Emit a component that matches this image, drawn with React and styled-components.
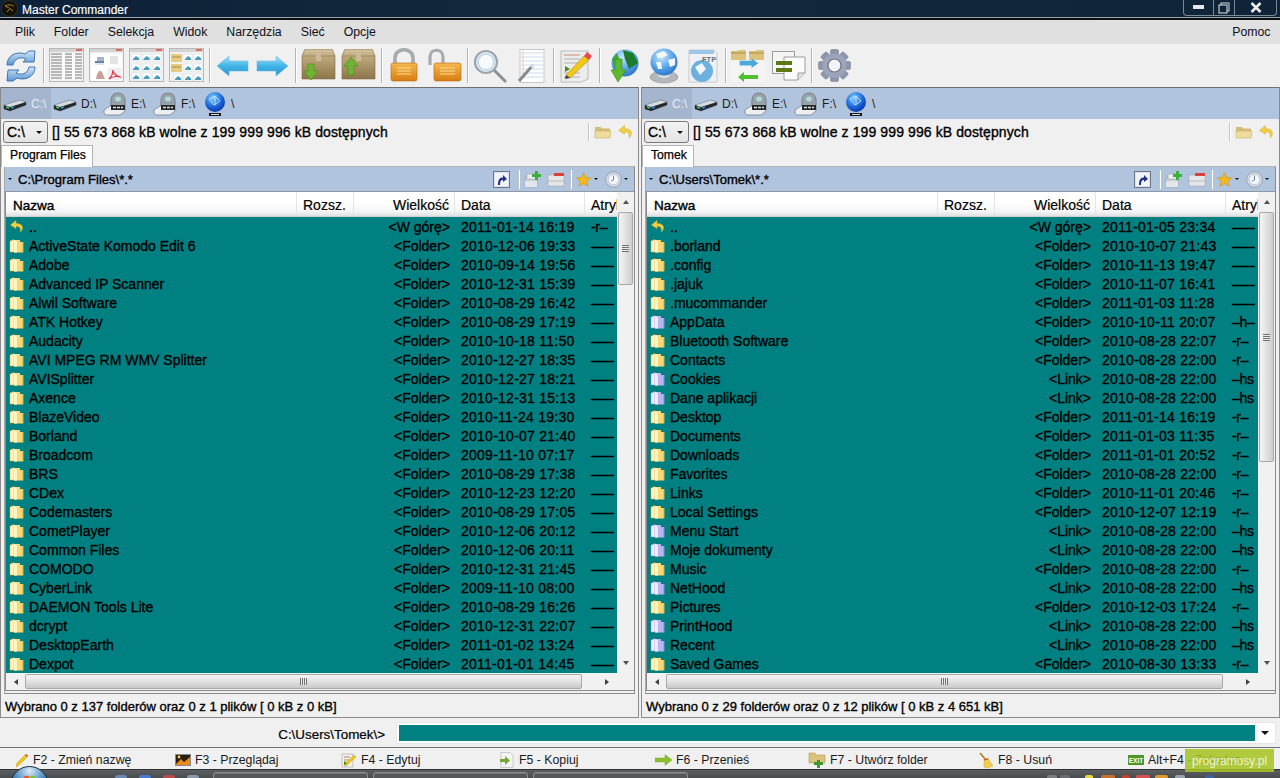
import React from 'react';
import styled, { createGlobalStyle } from 'styled-components';

const Global = createGlobalStyle`
  html, body { margin: 0; padding: 0; background: #f0f0f0; overflow: hidden; }
  * { box-sizing: border-box; }
  #root { width: 1280px; height: 778px; overflow: hidden; }
`;

const Window = styled.div`
  position: relative;
  width: 1280px;
  height: 778px;
  display: flex;
  flex-direction: column;
  overflow: hidden;
  background: #f0f0f0;
  font-family: "Liberation Sans", Arial, sans-serif;
  font-size: 13px;
  color: #000;
`;

const TitleBar = styled.div`
  height: 20px;
  flex: none;
  display: flex;
  align-items: flex-start;
  background: linear-gradient(90deg, #0d2238 0%, #13273d 45%, #0f2339 100%);
  border-bottom: 2px solid #0b0f14;
  box-shadow: inset 0 -1px 0 #9aa4ad;
  padding-left: 1px;
`;
const TitleText = styled.span`
  margin: 2px 0 0 4px;
  color: #fff;
  font-size: 12px;
  line-height: 16px;
  -webkit-text-stroke: 0.15px #fff;
`;
const WinButtons = styled.div`
  margin-left: auto;
  margin-right: 3px;
  display: flex;
  height: 16px;
  border: 1px solid #7c8894;
  border-top: none;
  border-radius: 0 0 4px 4px;
`;
const WinButton = styled.div`
  width: ${p => p.$w}px;
  display: flex;
  align-items: center;
  justify-content: center;
  border-left: ${p => (p.$first ? 'none' : '1px solid #7c8894')};
`;

const MenuBar = styled.div`
  height: 24px;
  flex: none;
  display: flex;
  align-items: center;
  padding: 0 0 0 5.5px;
  background: #e0e0e0;
  font-size: 12.3px;
  color: #101018;
`;
const MenuItem = styled.span`
  padding: 0 9.5px;
  ${p => p.$end && 'margin-left: auto;'}
`;

const ToolBar = styled.div`
  height: 43px;
  flex: none;
  display: flex;
  align-items: center;
  background: #f0f0f0;
`;
const Tool = styled.div`
  width: ${p => p.$w}px;
  height: 36px;
  flex: none;
  display: flex;
  align-items: center;
  justify-content: center;
`;
const ToolSep = styled.div`
  width: 1px;
  height: 35px;
  margin: 0 2px;
  background: #b4b4b4;
  box-shadow: 1px 0 0 #fff;
`;

const Panels = styled.div`
  display: grid;
  grid-template-columns: 639px 639px;
  gap: 2px;
  height: 631px;
  flex: none;
`;
const Panel = styled.div`
  display: flex;
  flex-direction: column;
  border: 1px solid #8a8a8a;
  border-top-color: #6f6f6f;
  min-width: 0;
`;
const DriveBar = styled.div`
  height: 31px;
  flex: none;
  display: flex;
  background: #b0c4de;
`;
const Drive = styled.div`
  width: 50px;
  flex: none;
  display: flex;
  align-items: center;
  padding-left: 2px;
  gap: 4px;
  font-size: 12px;
  color: ${p => (p.$on ? '#e6ecf4' : '#1a1a1a')};
  background: ${p => (p.$on ? '#a4b5cd' : 'transparent')};
`;
const InfoRow = styled.div`
  height: 26px;
  flex: none;
  display: flex;
  align-items: center;
  padding: 0 4px 0 2px;
`;
const Combo = styled.div`
  width: 45px;
  height: 22px;
  flex: none;
  display: flex;
  align-items: center;
  justify-content: space-between;
  padding: 0 5px 0 3px;
  border: 1px solid #7a7a7a;
  border-radius: 3px;
  background: linear-gradient(#f3f3f3, #e4e4e4);
`;
const Bold = styled.span`
  font-size: 14px;
  white-space: nowrap;
  -webkit-text-stroke: 0.35px #000;
`;
const FreeText = styled(Bold)`
  margin-left: 4px;
  letter-spacing: 0.1px;
`;
const Caret = styled.span`
  width: 0;
  height: 0;
  flex: none;
  margin: ${p => p.$m || 0};
  border-left: ${p => p.$s || 3.5}px solid transparent;
  border-right: ${p => p.$s || 3.5}px solid transparent;
  border-top: ${p => p.$s || 3.5}px solid ${p => p.$c || '#111'};
`;
const RightIcons = styled.div`
  margin-left: auto;
  display: flex;
  align-items: center;
  gap: ${p => p.$gap || 5}px;
`;
const MiniSep = styled.div`
  width: 1px;
  height: ${p => p.$h || 18}px;
  background: #c4c4c4;
  box-shadow: 1px 0 0 #fff;
`;
const ShortcutWrap = styled.div`
  display: flex;
  margin-right: 3px;
`;
const TabStrip = styled.div`
  height: 22px;
  flex: none;
  display: flex;
  align-items: flex-end;
  margin-bottom: -1px;
  position: relative;
  z-index: 1;
`;
const Tab = styled.div`
  height: 22px;
  padding: 0 6px 3px 8px;
  display: flex;
  align-items: center;
  background: #fff;
  border: 1px solid #b4b4b4;
  border-bottom: none;
  font-size: 12.2px;
  -webkit-text-stroke: 0.25px #000;
  white-space: nowrap;
`;
const TabBody = styled.div`
  flex: 1;
  min-height: 0;
  margin: 0 3px;
  display: flex;
  flex-direction: column;
  border: 1px solid #8a8a8a;
  border-left-color: #a8a8a8;
  border-top-color: #b4b4b4;
`;
const PathBar = styled.div`
  height: 25px;
  flex: none;
  display: flex;
  align-items: center;
  background: #b0c4de;
  padding: 0 6px 0 3px;
  border-bottom: 1px solid #8f98a4;
`;
const PathText = styled(Bold)`
  margin-left: 6px;
  font-size: 13px;
`;
const ListWrap = styled.div`
  display: flex;
  flex-direction: column;
  height: 499px;
  flex: none;
  width: 630px;
  border-left: 1px solid #8a8a8a;
  border-right: 1px solid #8a8a8a;
  border-bottom: 1px solid #8a8a8a;
`;
const ListMain = styled.div`
  display: flex;
  height: 481px;
  flex: none;
`;
const Table = styled.div`
  width: 611px;
  flex: none;
  display: flex;
  flex-direction: column;
  overflow: hidden;
`;
const Cols = styled.div`
  display: grid;
  grid-template-columns: 291px 57px 101px 130px 32px;
`;
const Header = styled(Cols)`
  height: 25px;
  flex: none;
  background: linear-gradient(#ffffff 40%, #f4f5f6 80%, #dfe0e1);
  border-bottom: 1px solid #d0d0d0;
`;
const HeadCell = styled.div`
  display: flex;
  align-items: center;
  justify-content: ${p => (p.$right ? 'flex-end' : 'flex-start')};
  padding: ${p => (p.$right ? '2px 5px 0 0' : p.$strong ? '2px 0 0 7px' : '2px 0 0 6px')};
  font-size: ${p => (p.$strong ? 13.5 : 14)}px;
  -webkit-text-stroke: ${p => (p.$strong ? '0.4px' : '0.2px')} #000;
  border-right: ${p => (p.$noline ? 'none' : '1px solid #e4e4e4')};
  white-space: nowrap;
  overflow: hidden;
`;
const Rows = styled.div`
  flex: 1;
  background: #008080;
  overflow: hidden;
`;
const Row = styled(Cols)`
  height: 19px;
  align-items: center;
`;
const Name = styled.div`
  display: flex;
  align-items: center;
  gap: 4px;
  padding-left: 3px;
  white-space: nowrap;
  overflow: hidden;
`;
const Cell = styled(Bold)`
  display: block;
  overflow: hidden;
  ${p => p.$right && 'text-align: right; padding-right: 5px;'}
  ${p => p.$date && 'padding-left: 6px; letter-spacing: 0.25px;'}
  ${p => p.$attr && 'padding-left: 6px; letter-spacing: -0.3px;'}
`;
const VBar = styled.div`
  width: 17px;
  flex: none;
  display: flex;
  flex-direction: column;
  background: #f1f1f1;
`;
const VBtn = styled.div`
  height: 20px;
  flex: none;
  display: flex;
  align-items: center;
  justify-content: center;
`;
const VTrack = styled.div`
  flex: 1;
  min-height: 0;
`;
const VThumb = styled.div`
  height: ${p => p.$h}px;
  margin: 0 1px;
  display: flex;
  align-items: center;
  justify-content: center;
  border: 1px solid #a8a8a8;
  border-radius: 2px;
  background: linear-gradient(90deg, #f4f4f4, #e2e2e2 50%, #cdcdcd);
`;
const UpCaret = styled.span`
  width: 0;
  height: 0;
  border-left: 3.5px solid transparent;
  border-right: 3.5px solid transparent;
  border-bottom: 4px solid #505050;
`;
const DownCaret = styled.span`
  width: 0;
  height: 0;
  border-left: 3.5px solid transparent;
  border-right: 3.5px solid transparent;
  border-top: 4px solid #505050;
`;
const Grip = styled.div`
  width: 7px;
  height: 7px;
  background: repeating-linear-gradient(180deg, #707070 0 1px, #ececec 1px 2px);
`;
const GripH = styled.div`
  width: 7px;
  height: 7px;
  background: repeating-linear-gradient(90deg, #707070 0 1px, #ececec 1px 2px);
`;
const HBar = styled.div`
  height: 17px;
  flex: none;
  display: flex;
  align-items: stretch;
  background: #f1f1f1;
`;
const HBtn = styled.div`
  width: 19px;
  flex: none;
  display: flex;
  align-items: center;
  justify-content: center;
  ${p => p.$push && 'margin-left: 15px;'}
`;
const HThumb = styled.div`
  width: 557px;
  margin: 1px 0;
  flex: none;
  display: flex;
  align-items: center;
  justify-content: center;
  border: 1px solid #a8a8a8;
  border-radius: 2px;
  background: linear-gradient(#f4f4f4, #e2e2e2 50%, #c8c8c8);
`;
const LeftCaret = styled.span`
  width: 0;
  height: 0;
  border-top: 3.5px solid transparent;
  border-bottom: 3.5px solid transparent;
  border-right: 4px solid #404040;
`;
const RightCaret = styled.span`
  width: 0;
  height: 0;
  border-top: 3.5px solid transparent;
  border-bottom: 3.5px solid transparent;
  border-left: 4px solid #404040;
`;
const Status = styled.div`
  height: 23px;
  flex: none;
  display: flex;
  align-items: center;
  padding: 1px 0 0 4px;
`;
const StatusText = styled(Bold)`
  font-size: 13px;
`;
const CommandRow = styled.div`
  height: 29px;
  flex: none;
  display: flex;
  align-items: center;
  justify-content: flex-end;
  padding-right: 4px;
`;
const CmdLabel = styled(Bold)`
  font-size: 13.4px;
  margin: 3px 11px 0 0;
  -webkit-text-stroke: 0.2px #000;
`;
const CmdInput = styled.div`
  width: 880px;
  height: 22px;
  display: flex;
  align-items: stretch;
  background: #fff;
  border: 1px solid #e6e6e6;
  padding: 2px 0 2px 2px;
`;
const CmdField = styled.div`
  flex: 1;
  background: #008080;
`;
const CmdDrop = styled.div`
  width: 20px;
  flex: none;
  display: flex;
  align-items: center;
  justify-content: center;
`;
const FnBar = styled.div`
  height: 22px;
  flex: none;
  display: grid;
  grid-template-columns: 160px 166px 158px 156px 153px 171px 149px 1fr;
  padding: 3px 0 0 15px;
  border-top: 1px solid #707070;
  background: #f0f0f0;
`;
const FnItem = styled.div`
  display: flex;
  align-items: center;
  gap: 4px;
  font-size: 12.3px;
  color: #1a1a22;
  white-space: nowrap;
`;
const TaskBar = styled.div`
  flex: 1;
  min-height: 0;
  display: flex;
  align-items: flex-start;
  background: linear-gradient(#2f3336 0 1px, #5b5f62 1px, #4a4d50);
  position: relative;
`;
const Orb = styled.div`
  width: 39px;
  height: 39px;
  margin: -3px 0 0 10px;
  flex: none;
  border-radius: 50%;
  border: 1px solid #1a2a38;
  background:
    radial-gradient(circle at 42% 32%, #e05a3c 0 3px, transparent 3.5px),
    radial-gradient(circle at 58% 32%, #7ac040 0 3px, transparent 3.5px),
    radial-gradient(circle at 50% 10%, #dbeaf6, #4a8cc0 40%, #1a4a78 70%, #0c2236);
`;
const Quick = styled.div`
  margin: 6px 0 0 66px;
  width: 98px;
  display: flex;
  gap: 12px;
  flex: none;
`;
const QuickDot = styled.div`
  width: 12px;
  height: 12px;
  border-radius: 3px;
  background: ${p => p.$c};
`;
const TaskBtn = styled.div`
  width: 155px;
  height: 20px;
  flex: none;
  margin: 3px 5px 0 0;
  border: 1px solid #8b8f92;
  border-radius: 3px;
  background: #55595c;
  box-shadow: inset 0 1px 0 #74787b;
`;
const Tray = styled.div`
  margin: 6px 0 0 auto;
  width: 233px;
  display: flex;
`;
const TrayDot = styled.div`
  width: ${p => p.$w}px;
  height: 12px;
  flex: none;
  margin-left: ${p => p.$l}px;
  border-radius: 2px;
  background: ${p => p.$c};
`;
const Watermark = styled.div`
  position: absolute;
  left: 1185px;
  top: 749px;
  width: 89px;
  height: 23px;
  display: flex;
  align-items: center;
  justify-content: center;
  background: rgba(166, 196, 38, 0.88);
  color: #f0f3dc;
  font-size: 12px;
`;

/* ---------- icons ---------- */
const FolderIcon = ({ purple }) => {
  const a = purple ? '#b9b5ee' : '#f6d878';
  const b = purple ? '#ecebfc' : '#fdf4c4';
  const c = purple ? '#8f8ad6' : '#d8ae3c';
  return (
    <svg width="16" height="16" viewBox="0 0 16 16">
      <path d="M1 3 L5 1.5 L5 14 L1 14 Z" fill={b} stroke={c} strokeWidth=".5" />
      <path d="M5 2 H11 V4 H14 V14.5 H5 Z" fill={a} />
      <path d="M5 2 L8 3 V14.5 H5 Z" fill={b} />
      <path d="M14 4 V14.5" stroke={c} strokeWidth="1" />
    </svg>
  );
};
const UpIcon = ({ size = 16 }) => (
  <svg width={size} height={size} viewBox="0 0 16 16">
    <path d="M7 1.5 L1.5 6 L7 9.5 V7.2 C10 7 12 8.5 11.5 13 C14.5 10 15 4.5 7 4.5 Z" fill="#f0d040" stroke="#d8b030" strokeWidth=".6" />
  </svg>
);
const HddIcon = () => (
  <svg width="24" height="18" viewBox="0 0 24 18">
    <path d="M1 10 L17 5 L23 7 L23 10 L7 16 L1 14 Z" fill="#d6dbe0" stroke="#6a7078" strokeWidth=".6" />
    <path d="M1 10 L7 12 L23 7 L23 10 L7 16 L1 14 Z" fill="#23282c" />
    <path d="M3 12 L6 13" stroke="#42d66a" strokeWidth="1.5" />
    <path d="M8 13 L11 12" stroke="#3a8ee8" strokeWidth="1.5" />
  </svg>
);
const DiscIcon = () => (
  <svg width="24" height="24" viewBox="0 0 24 24">
    <path d="M1 18 L7 14 H22 V19 L17 23 H3 L1 21 Z" fill="#eceef0" stroke="#62676c" strokeWidth=".6" />
    <path d="M8 14 C7 4 10 1 15 1 C20 1 23 4 22 14 Z" fill="#9aa2a8" stroke="#5a6066" strokeWidth=".6" />
    <ellipse cx="15" cy="7" rx="3.5" ry="3" fill="#bcd4d8" stroke="#5a9aa0" strokeWidth=".5" />
    <path d="M8 13 H22 V18 H8 Z" fill="#26292c" />
    <path d="M10 15.5 H20" stroke="#e0e0e0" strokeWidth="1.4" strokeDasharray="3 1" />
  </svg>
);
const NetIcon = () => (
  <svg width="24" height="26" viewBox="0 0 24 26">
    <defs>
      <radialGradient id="netg" cx=".4" cy=".3" r=".8">
        <stop offset="0" stopColor="#7fd0ff" />
        <stop offset=".6" stopColor="#1560d8" />
        <stop offset="1" stopColor="#0a2a90" />
      </radialGradient>
    </defs>
    <circle cx="12" cy="11" r="10" fill="url(#netg)" />
    <path d="M6 8 L12 5 L17 10 L11 14 Z M12 5 V14" stroke="#cfeaff" strokeWidth=".8" fill="none" />
    <path d="M6 22 H18 V25 H6 Z" fill="#15181c" />
    <path d="M8 23.5 H16" stroke="#dcdcdc" strokeWidth="1" />
  </svg>
);
const SmallFolder = () => (
  <svg width="18" height="14" viewBox="0 0 18 14">
    <path d="M1 2 H7 L8 3.5 H16 V13 H1 Z" fill="#d2bd78" />
    <path d="M1 6 H17 L16 13 H1 Z" fill="#efdc9c" stroke="#c2a85c" strokeWidth=".5" />
  </svg>
);
const ShortcutIcon = () => (
  <svg width="17" height="17" viewBox="0 0 17 17">
    <rect x=".5" y=".5" width="16" height="16" fill="#d9e2ee" stroke="#6c7686" />
    <rect x="2" y="2" width="13" height="13" fill="#f0f4f9" />
    <path d="M5 14 C5 8 7 6.5 10 6.5 V4 L14 8 L10 11 V9 C8 9 7 10 7 14 Z" fill="#25308c" />
  </svg>
);
const AddFolderIcon = () => (
  <svg width="18" height="18" viewBox="0 0 18 18">
    <path d="M1 7 H13 V17 H1 Z" fill="#c8ced4" stroke="#9aa0a6" strokeWidth=".6" />
    <path d="M3 4 H12 V9 H3 Z" fill="#eceeef" stroke="#a6aaae" strokeWidth=".6" />
    <path d="M1 11 H13 V17 H1 Z" fill="#e2e6ea" />
    <path d="M11 1 H14 V4 H17 V7 H14 V10 H11 V7 H8 V4 H11 Z" fill="#3ab03a" />
  </svg>
);
const RemoveFolderIcon = () => (
  <svg width="18" height="15" viewBox="0 0 18 15">
    <path d="M1 3 H17 V14 H1 Z" fill="#e4e6e8" stroke="#a6aaae" strokeWidth=".6" />
    <path d="M7 1 H17 V4 H7 Z" fill="#d8403c" />
    <path d="M1 9 H17" stroke="#b8bcc0" />
  </svg>
);
const StarIcon = () => (
  <svg width="15" height="15" viewBox="0 0 15 15">
    <path d="M7.5 .8 L9.6 5.4 L14.6 5.9 L10.8 9.2 L12 14.2 L7.5 11.6 L3 14.2 L4.2 9.2 L.4 5.9 L5.4 5.4 Z" fill="#f6b81c" stroke="#c48a10" strokeWidth=".5" />
  </svg>
);
const ClockIcon = () => (
  <svg width="17" height="17" viewBox="0 0 17 17">
    <circle cx="8.5" cy="8.5" r="7.8" fill="#d6dde6" stroke="#8a94a0" strokeWidth=".8" />
    <circle cx="8.5" cy="8.5" r="5.4" fill="#f4f7fb" stroke="#a4bad4" strokeWidth=".8" />
    <path d="M8.5 4.5 V9 L6 10" stroke="#4a6a90" strokeWidth=".8" fill="none" />
  </svg>
);

const Refresh = () => (
  <svg width="32" height="32" viewBox="0 0 32 32">
    <defs>
      <linearGradient id="rfg" x1="0" y1="0" x2="0" y2="1">
        <stop offset="0" stopColor="#d4e6f6" />
        <stop offset="1" stopColor="#5a96d4" />
      </linearGradient>
    </defs>
    <path d="M2 15 C2 5 12 1 20 4 L24 1 L30 1 L29 12 L18 12 L21 9 C15 6 9 9 8 15 Z" fill="url(#rfg)" stroke="#3d74b4" strokeWidth="1" />
    <path d="M30 17 C30 27 20 31 12 28 L8 31 L2 31 L3 20 L14 20 L11 23 C17 26 23 23 24 17 Z" fill="url(#rfg)" stroke="#3d74b4" strokeWidth="1" />
  </svg>
);
const ViewWin = ({ children }) => (
  <svg width="35" height="35" viewBox="0 0 35 35">
    <rect x=".5" y=".5" width="34" height="33" fill="#f2f2f2" stroke="#b8b8b8" />
    <rect x="1" y="1" width="33" height="3" fill="#d4d4d4" />
    <rect x="27" y="1" width="6" height="2" fill="#e46a5c" />
    {children}
  </svg>
);
const Thumb = ({ x, y }) => (
  <g>
    <rect x={x} y={y} width="8" height="7" fill="#fff" stroke="#cdd8dc" strokeWidth=".5" />
    <path d={`M${x + 1} ${y + 5} L${x + 4} ${y + 2} L${x + 7} ${y + 4} V${y + 6} H${x + 1} Z`} fill="#4a9cb8" />
  </g>
);
const ViewDetail = () => (
  <ViewWin>
    {[6, 9, 12, 15, 18, 21, 24, 27, 30].map(y => (
      <path key={y} d={`M2 ${y} H33`} stroke="#a8a8a8" strokeWidth="1.6" />
    ))}
    <rect x="13" y="5" width="3" height="27" fill="#fff" />
    <rect x="23" y="5" width="3" height="27" fill="#fff" />
  </ViewWin>
);
const ViewPdf = () => (
  <ViewWin>
    <rect x="2" y="6" width="31" height="27" fill="#fff" />
    <path d="M8 9 H15 V13 H8 Z" fill="#a8b4c4" />
    <path d="M6 14 H15" stroke="#2c5a8a" strokeWidth="1.5" />
    <path d="M6 16 H15 M21 9 H29 M21 11 H29 M21 13 H29 M21 15 H29" stroke="#c8c8c8" />
    <rect x="19" y="20" width="13" height="12" fill="#f4eaf4" />
    <path d="M7 31 C8 24 11 21 13 24 L16 31 Z" fill="#caa09a" />
    <path d="M24 22 C24 27 20 31 20 31 C24 28 30 28 31 29 C27 28 24 25 24 22 Z" fill="none" stroke="#e03838" strokeWidth="1.2" />
  </ViewWin>
);
const ViewThumbs = () => (
  <ViewWin>
    {[6, 16, 25].flatMap(y => [3, 13.5, 24].map(x => <Thumb key={`${x}${y}`} x={x} y={y} />))}
  </ViewWin>
);
const ViewMixed = () => (
  <ViewWin>
    <rect x="2" y="6" width="11" height="8" fill="#e6cc80" />
    <rect x="2" y="16" width="11" height="8" fill="#e6cc80" />
    <path d="M3 9 H12 M3 19 H12" stroke="#a88e44" />
    <Thumb x={15} y={6} /><Thumb x={25} y={6} />
    <Thumb x={15} y={16} /><Thumb x={25} y={16} />
    <Thumb x={5} y={26} /><Thumb x={15} y={26} /><Thumb x={25} y={26} />
  </ViewWin>
);
const ArrowBig = ({ dir }) => (
  <svg width="33" height="22" viewBox="0 0 33 22" style={dir === 'r' ? { transform: 'scaleX(-1)' } : undefined}>
    <defs>
      <linearGradient id={`ag${dir}`} x1="0" y1="0" x2="0" y2="1">
        <stop offset="0" stopColor="#a8e2f8" />
        <stop offset=".5" stopColor="#40b4e6" />
        <stop offset="1" stopColor="#2a90cc" />
      </linearGradient>
    </defs>
    <path d="M1 11 L13 1 V6 H32 V16 H13 V21 Z" fill={`url(#ag${dir})`} stroke="#68bce0" strokeWidth=".6" />
  </svg>
);
const Box = ({ up }) => (
  <svg width="35" height="33" viewBox="0 0 35 33">
    <defs>
      <linearGradient id="boxg" x1="0" y1="0" x2="0" y2="1">
        <stop offset="0" stopColor="#d4c4a0" />
        <stop offset=".25" stopColor="#bfa97c" />
        <stop offset="1" stopColor="#8c7548" />
      </linearGradient>
    </defs>
    <path d="M4 0 H31 L34 7 V30 H1 V7 Z" fill="url(#boxg)" stroke="#7c6a44" strokeWidth=".6" />
    <path d="M1 7 H34" stroke="#8c7a54" strokeWidth=".6" />
    <rect x="15" y="1" width="5" height="11" fill="#cdbb98" />
    {up
      ? <path d="M3 17 L10 8 L17 17 H13 V26 H7 V17 Z" fill="#6eb432" stroke="#4c8a1c" strokeWidth=".6" />
      : <path d="M3 22 L10 31 L17 22 H13 V15 H7 V22 Z" fill="#6eb432" stroke="#4c8a1c" strokeWidth=".6" />}
  </svg>
);
const Lock = ({ open }) => (
  <svg width={open ? 34 : 32} height="35" viewBox={open ? '0 0 34 35' : '0 0 32 35'}>
    <defs>
      <linearGradient id={`lk${open ? 1 : 0}`} x1="0" y1="0" x2="0" y2="1">
        <stop offset="0" stopColor="#f6b84c" />
        <stop offset="1" stopColor="#d87c10" />
      </linearGradient>
    </defs>
    {open
      ? <path d="M2 17 V9 C2 0 15 0 15 9 V15" fill="none" stroke="#a8abae" strokeWidth="3.2" />
      : <path d="M7 15 V10 C7 -1 25 -1 25 10 V15" fill="none" stroke="#a8abae" strokeWidth="3.6" />}
    <rect x={open ? 6 : 3} y="15" width={open ? 27 : 26} height="18" rx="2" fill={`url(#lk${open ? 1 : 0})`} stroke="#b06a14" strokeWidth=".6" />
    {[20, 23, 26].map(y => (
      <path key={y} d={`M${open ? 12 : 9} ${y} H${open ? 27 : 23}`} stroke="#f8dc98" strokeWidth="1" />
    ))}
  </svg>
);
const Magnifier = () => (
  <svg width="34" height="34" viewBox="0 0 34 34">
    <path d="M20 20 L32 32" stroke="#8c9094" strokeWidth="3" strokeLinecap="round" />
    <circle cx="13" cy="13" r="11" fill="#e8f2fb" stroke="#9ca4ac" strokeWidth="2.2" />
    <circle cx="13" cy="13" r="8" fill="#f8fbfe" stroke="#bcd4ec" strokeWidth="1.5" />
  </svg>
);
const Notepad = () => (
  <svg width="28" height="34" viewBox="0 0 28 34">
    <rect x="3" y=".5" width="24" height="33" fill="#fdfdfd" stroke="#c8c8c8" />
    {[4, 8, 12, 16, 20, 24, 28].map(y => <path key={y} d={`M4 ${y} H26`} stroke="#d0dcf0" />)}
    <path d="M6 2 V30" stroke="#e8c8c8" />
    <path d="M2 32 L16 16" stroke="#85898c" strokeWidth="3" />
    <path d="M14 18 L16 16" stroke="#e0e0e0" strokeWidth="3" />
  </svg>
);
const EditDoc = () => (
  <svg width="33" height="34" viewBox="0 0 33 34">
    <path d="M1 2 H28 V30 L21 33 H1 Z" fill="#ececec" stroke="#a8a8a8" strokeWidth=".7" />
    {[6, 10, 14, 24, 28].map(y => <path key={y} d={`M4 ${y} H20`} stroke={y < 8 ? '#c88a70' : '#b0b0b0'} />)}
    <path d="M5 17 L10 20 L5 23 Z" fill="#4a8a1a" />
    <path d="M6 26 L24 7 L29 11 L10 29 Z" fill="#f2c818" stroke="#b48a10" strokeWidth=".6" />
    <path d="M24 7 L27 3 L32 7 L29 11 Z" fill="#e84a54" />
    <path d="M6 26 L5 30 L10 29 Z" fill="#3a3a3a" />
  </svg>
);
const Globe = ({ id }) => (
  <g>
    <defs>
      <radialGradient id={id} cx=".4" cy=".3" r=".8">
        <stop offset="0" stopColor="#c8e8ff" />
        <stop offset=".6" stopColor="#4a9ce4" />
        <stop offset="1" stopColor="#2a6cb8" />
      </radialGradient>
    </defs>
    <circle cx="16" cy="14" r="13.5" fill={`url(#${id})`} />
  </g>
);
const GlobeDown = () => (
  <svg width="30" height="34" viewBox="0 0 30 34">
    <Globe id="gd" />
    <path d="M14 1 L24 4 L29 14 L20 20 L16 10 Z" fill="#1c7c2c" />
    <path d="M3 10 L8 4 L11 12 L5 18 Z" fill="#3ca83c" />
    <path d="M2 21 H6 V10 H13 V21 H17 L9 33 Z" fill="#5cb82c" stroke="#3c8a1c" strokeWidth=".6" />
  </svg>
);
const GlobeStand = () => (
  <svg width="32" height="36" viewBox="0 0 32 36">
    <ellipse cx="16" cy="29" rx="14" ry="6" fill="#b4b8bc" stroke="#8a8e92" strokeWidth=".6" />
    <ellipse cx="16" cy="27" rx="6" ry="3" fill="#dde0e2" />
    <Globe id="gs" />
    <path d="M8 6 L16 3 L20 7 L14 10 L10 10 Z M20 12 L27 10 L27 17 L22 19 Z M8 14 L13 14 L14 21 L10 21 Z" fill="#f4f8fc" />
  </svg>
);
const FtpDoc = () => (
  <svg width="30" height="34" viewBox="0 0 30 34">
    <path d="M1 1 H26 L29 4 V33 H1 Z" fill="#eef2f6" stroke="#b8bcc0" strokeWidth=".7" />
    <path d="M1 1 H26 V5 H1 Z" fill="#9cc8e8" />
    <circle cx="14" cy="22" r="11" fill="#6cb0e0" />
    <path d="M7 18 L14 14 L18 20 L12 26 Z" fill="#f2f6fa" />
    <text x="14" y="13" fontSize="7.5" fontFamily="Liberation Sans" fontWeight="700" fill="#6a7078">FTP</text>
  </svg>
);
const Sync = () => (
  <svg width="36" height="34" viewBox="0 0 36 34">
    <path d="M1 2 H7 L9 1 H16 V11 H1 Z M19 2 H25 L27 1 H34 V11 H19 Z" fill="#dcc27a" />
    <path d="M1 4 H16 M19 4 H34" stroke="#a89048" />
    <rect x="1" y="12" width="34" height="21" fill="#f4f4f4" />
    <path d="M9 16 H23 V13 L31 19 L23 25 V22 H9 Z" fill="#4aa8dc" transform="translate(2 -1) scale(.85 .8)" />
    <path d="M28 26 H14 V23 L8 28 L14 33 V30 H28 Z" fill="#50c030" />
  </svg>
);
const Compare = () => (
  <svg width="34" height="30" viewBox="0 0 34 30">
    <rect x=".5" y=".5" width="22" height="22" fill="#f6f6f6" stroke="#9c9c9c" />
    <path d="M12 6 H33 V22 L26 29 H12 Z" fill="#fbfbfb" stroke="#9c9c9c" />
    <path d="M26 29 L26 22 H33" fill="#e0e0e0" stroke="#9c9c9c" />
    <rect x="4" y="10" width="16" height="4" fill="#5c7a10" />
    <rect x="4" y="17" width="16" height="4" fill="#5c7a10" />
  </svg>
);
const Gear = () => (
  <svg width="33" height="33" viewBox="0 0 33 33">
    <g fill="#8e96ac" stroke="#6c7288" strokeWidth=".5">
      {[0, 45, 90, 135].map(a => (
        <rect key={a} x="12.5" y="0.5" width="8" height="32" rx="1.5" transform={`rotate(${a} 16.5 16.5)`} />
      ))}
    </g>
    <circle cx="16.5" cy="16.5" r="12" fill="#9ca4ba" />
    <circle cx="16.5" cy="16.5" r="6.5" fill="#f4f4f6" stroke="#6c7288" strokeWidth="1.2" />
  </svg>
);

const Pencil = () => (
  <svg width="14" height="15" viewBox="0 0 14 15">
    <path d="M1 14 L2 10 L11 1 L13 3 L4 12 Z" fill="#f2c818" stroke="#c09410" strokeWidth=".5" />
    <path d="M11 1 L13 3 L12 4 L10 2 Z" fill="#e84a54" />
  </svg>
);
const PicIcon = () => (
  <svg width="16" height="12" viewBox="0 0 16 12">
    <rect x=".5" y=".5" width="15" height="11" fill="#2c1c10" stroke="#888" />
    <path d="M1 10 L6 5 L9 8 L15 3 V11 H1 Z" fill="#e88a1c" />
    <circle cx="4" cy="3" r="1.4" fill="#f8d050" />
  </svg>
);
const EditSmall = () => (
  <svg width="16" height="16" viewBox="0 0 16 16">
    <path d="M1 2 H12 V15 H1 Z" fill="#f2f2f2" stroke="#a0a0a0" strokeWidth=".6" />
    <path d="M3 5 H9 M3 8 H8" stroke="#c08060" />
    <path d="M3 13 L13 3 L15 5 L5 14 Z" fill="#f2c818" stroke="#b48a10" strokeWidth=".4" />
    <path d="M3 9 L6 11 L3 13 Z" fill="#4a8a1a" />
  </svg>
);
const CopyIcon = () => (
  <svg width="16" height="16" viewBox="0 0 16 16">
    <path d="M2 .5 H11 L14 3.5 V15.5 H2 Z" fill="#f4f4f4" stroke="#b0b0b0" strokeWidth=".6" />
    <path d="M1 7 H6 V4 L11 8.5 L6 13 V10 H1 Z" fill="#6fa832" />
  </svg>
);
const MoveIcon = () => (
  <svg width="17" height="12" viewBox="0 0 17 12">
    <path d="M0 4 H10 V0.5 L17 6 L10 11.5 V8 H0 Z" fill="#8ac028" stroke="#6a9a1c" strokeWidth=".4" />
  </svg>
);
const NewFolder = () => (
  <svg width="18" height="16" viewBox="0 0 18 16">
    <path d="M1 1 H7 L8 3 H17 V11 H1 Z" fill="#dcc27a" stroke="#a89048" strokeWidth=".5" />
    <path d="M9 8 H12 V10 H15 V13 H12 V16 H9 V13 H6 V10 H9 Z" fill="#3c9a2a" />
  </svg>
);
const Broom = () => (
  <svg width="15" height="17" viewBox="0 0 15 17">
    <path d="M1 1 L7 8" stroke="#a87c2c" strokeWidth="1.6" />
    <path d="M5 7 L9 6 L14 14 L9 16 L5 15 Z" fill="#f0cc50" stroke="#c09c30" strokeWidth=".4" />
    <path d="M5 8 L9 7" stroke="#d83838" strokeWidth="1.2" />
  </svg>
);
const ExitIcon = () => (
  <svg width="16" height="10" viewBox="0 0 16 10">
    <rect width="16" height="10" rx="1" fill="#4c9a28" stroke="#3c7a1c" strokeWidth=".5" />
    <text x="8" y="7.8" fontSize="6.5" fontWeight="700" textAnchor="middle" fontFamily="Liberation Sans" fill="#fff">EXIT</text>
  </svg>
);
const LogoIcon = () => (
  <svg width="17" height="17" viewBox="0 0 17 17">
    <circle cx="8.5" cy="8.5" r="8" fill="#14100a" stroke="#3a3018" />
    <path d="M4 6 C7 4 12 5 13 6.5 M6 12 L9 8.5 L12 11 M4 6 L8 8" fill="none" stroke="#b08a30" strokeWidth="1" />
  </svg>
);

/* ---------- data ---------- */
const D = '–––';
const R = '-r–';
const HS = '–hs';
const leftRows = [
  ['ActiveState Komodo Edit 6', '2010-12-06 19:33'], ['Adobe', '2010-09-14 19:56'],
  ['Advanced IP Scanner', '2010-12-31 15:39'], ['Alwil Software', '2010-08-29 16:42'],
  ['ATK Hotkey', '2010-08-29 17:19'], ['Audacity', '2010-10-18 11:50'],
  ['AVI MPEG RM WMV Splitter', '2010-12-27 18:35'], ['AVISplitter', '2010-12-27 18:21'],
  ['Axence', '2010-12-31 15:13'], ['BlazeVideo', '2010-11-24 19:30'],
  ['Borland', '2010-10-07 21:40'], ['Broadcom', '2009-11-10 07:17'],
  ['BRS', '2010-08-29 17:38'], ['CDex', '2010-12-23 12:20'],
  ['Codemasters', '2010-08-29 17:05'], ['CometPlayer', '2010-12-06 20:12'],
  ['Common Files', '2010-12-06 20:11'], ['COMODO', '2010-12-31 21:45'],
  ['CyberLink', '2009-11-10 08:00'], ['DAEMON Tools Lite', '2010-08-29 16:26'],
  ['dcrypt', '2010-12-31 22:07'], ['DesktopEarth', '2011-01-02 13:24'],
  ['Dexpot', '2011-01-01 14:45'],
].map(([n, d]) => ({ n, d, s: '<Folder>', a: D }));

const rightRows = [
  { n: '.borland', s: '<Folder>', d: '2010-10-07 21:43', a: D },
  { n: '.config', s: '<Folder>', d: '2010-11-13 19:47', a: D },
  { n: '.jajuk', s: '<Folder>', d: '2010-11-07 16:41', a: D },
  { n: '.mucommander', s: '<Folder>', d: '2011-01-03 11:28', a: D },
  { n: 'AppData', s: '<Folder>', d: '2010-10-11 20:07', a: '–h–', p: 1 },
  { n: 'Bluetooth Software', s: '<Folder>', d: '2010-08-28 22:07', a: R },
  { n: 'Contacts', s: '<Folder>', d: '2010-08-28 22:00', a: R },
  { n: 'Cookies', s: '<Link>', d: '2010-08-28 22:00', a: HS, p: 1 },
  { n: 'Dane aplikacji', s: '<Link>', d: '2010-08-28 22:00', a: HS, p: 1 },
  { n: 'Desktop', s: '<Folder>', d: '2011-01-14 16:19', a: R },
  { n: 'Documents', s: '<Folder>', d: '2011-01-03 11:35', a: R },
  { n: 'Downloads', s: '<Folder>', d: '2011-01-01 20:52', a: R },
  { n: 'Favorites', s: '<Folder>', d: '2010-08-28 22:00', a: R },
  { n: 'Links', s: '<Folder>', d: '2010-11-01 20:46', a: R },
  { n: 'Local Settings', s: '<Folder>', d: '2010-12-07 12:19', a: R },
  { n: 'Menu Start', s: '<Link>', d: '2010-08-28 22:00', a: HS, p: 1 },
  { n: 'Moje dokumenty', s: '<Link>', d: '2010-08-28 22:00', a: HS, p: 1 },
  { n: 'Music', s: '<Folder>', d: '2010-08-28 22:00', a: R },
  { n: 'NetHood', s: '<Link>', d: '2010-08-28 22:00', a: HS, p: 1 },
  { n: 'Pictures', s: '<Folder>', d: '2010-12-03 17:24', a: R },
  { n: 'PrintHood', s: '<Link>', d: '2010-08-28 22:00', a: HS, p: 1 },
  { n: 'Recent', s: '<Link>', d: '2010-08-28 22:00', a: HS, p: 1 },
  { n: 'Saved Games', s: '<Folder>', d: '2010-08-30 13:33', a: R },
];

const tools = [
  [Refresh, 41], 'sep',
  [ViewDetail, 40], [ViewPdf, 40], [ViewThumbs, 40], [ViewMixed, 41], 'sep',
  [() => <ArrowBig dir="l" />, 40], [() => <ArrowBig dir="r" />, 41], 'sep',
  [() => <Box />, 40], [() => <Box up />, 41], 'sep',
  [() => <Lock />, 40], [() => <Lock open />, 41], 'sep',
  [Magnifier, 40], [Notepad, 41], 'sep',
  [EditDoc, 41], 'sep',
  [GlobeDown, 43], [GlobeStand, 37], [FtpDoc, 41], 'sep',
  [Sync, 40], [Compare, 41], 'sep',
  [Gear, 40],
];

const fnItems = [
  [Pencil, 'F2 - Zmień nazwę'], [PicIcon, 'F3 - Przeglądaj'], [EditSmall, 'F4 - Edytuj'],
  [CopyIcon, 'F5 - Kopiuj'], [MoveIcon, 'F6 - Przenieś'], [NewFolder, 'F7 - Utwórz folder'],
  [Broom, 'F8 - Usuń'], [ExitIcon, 'Alt+F4 - Zakończ'],
];

const trayItems = [
  ['#7a7e82', 10, 0], ['#6a6e72', 10, 3], ['#e8d840', 8, 15], ['#c8702c', 14, 8],
  ['#c84030', 8, 7], ['#d85050', 14, 6], ['#e09830', 13, 5], ['#9aa4ae', 10, 7], ['#3c62a0', 9, 20],
];

const FilePanel = ({ tab, path, upDate, upAttr, rows, status, thumb }) => (
  <Panel>
    <DriveBar>
      <Drive $on><HddIcon />C:\</Drive>
      <Drive><HddIcon />D:\</Drive>
      <Drive><DiscIcon />E:\</Drive>
      <Drive><DiscIcon />F:\</Drive>
      <Drive><NetIcon />\</Drive>
    </DriveBar>
    <InfoRow>
      <Combo><Bold>C:\</Bold><Caret /></Combo>
      <FreeText>[] 55 673 868 kB wolne z 199 999 996 kB dostępnych</FreeText>
      <RightIcons>
        <MiniSep />
        <SmallFolder />
        <UpIcon size={17} />
      </RightIcons>
    </InfoRow>
    <TabStrip><Tab>{tab}</Tab></TabStrip>
    <TabBody>
      <PathBar>
        <Caret $s={2.5} />
        <PathText>{path}</PathText>
        <RightIcons $gap={5}>
          <ShortcutWrap><ShortcutIcon /></ShortcutWrap>
          <MiniSep $h={19} />
          <AddFolderIcon />
          <RemoveFolderIcon />
          <MiniSep $h={19} />
          <StarIcon />
          <Caret $s={2.5} $m="0 2px 0 -2px" />
          <ClockIcon />
          <Caret $s={2.5} $m="0 0 0 -3px" />
        </RightIcons>
      </PathBar>
      <ListWrap>
        <ListMain>
          <Table>
            <Header>
              <HeadCell $strong>Nazwa</HeadCell>
              <HeadCell>Rozsz.</HeadCell>
              <HeadCell $right>Wielkość</HeadCell>
              <HeadCell>Data</HeadCell>
              <HeadCell $noline>Atrybuty</HeadCell>
            </Header>
            <Rows>
              <Row>
                <Name>
                  <UpIcon />
                  <Bold>..</Bold>
                </Name>
                <span />
                <Cell $right>{'<W górę>'}</Cell>
                <Cell $date>{upDate}</Cell>
                <Cell $attr>{upAttr}</Cell>
              </Row>
              {rows.map(r => (
                <Row key={r.n}>
                  <Name>
                    <FolderIcon purple={r.p} />
                    <Bold>{r.n}</Bold>
                  </Name>
                  <span />
                  <Cell $right>{r.s}</Cell>
                  <Cell $date>{r.d}</Cell>
                  <Cell $attr>{r.a}</Cell>
                </Row>
              ))}
            </Rows>
          </Table>
          <VBar>
            <VBtn><UpCaret /></VBtn>
            <VTrack>
              <VThumb $h={thumb}><Grip /></VThumb>
            </VTrack>
            <VBtn><DownCaret /></VBtn>
          </VBar>
        </ListMain>
        <HBar>
          <HBtn><LeftCaret /></HBtn>
          <HThumb><GripH /></HThumb>
          <HBtn $push><RightCaret /></HBtn>
        </HBar>
      </ListWrap>
    </TabBody>
    <Status><StatusText>{status}</StatusText></Status>
  </Panel>
);

export default function App() {
  return (
    <Window>
      <Global />
      <TitleBar>
        <LogoIcon />
        <TitleText>Master Commander</TitleText>
        <WinButtons>
          <WinButton $first $w={29}>
            <svg width="12" height="5" viewBox="0 0 12 5"><rect width="11" height="4" fill="#e8e8e8" /></svg>
          </WinButton>
          <WinButton $w={21}>
            <svg width="12" height="12" viewBox="0 0 12 12"><rect x="3" y="1" width="8" height="8" fill="none" stroke="#d8d8d8" /><rect x="1" y="3" width="8" height="8" fill="#0f2339" stroke="#e8e8e8" /></svg>
          </WinButton>
          <WinButton $w={42}>
            <svg width="12" height="11" viewBox="0 0 12 11"><path d="M1.5 1 L10.5 10 M10.5 1 L1.5 10" stroke="#ececec" strokeWidth="2.6" /></svg>
          </WinButton>
        </WinButtons>
      </TitleBar>
      <MenuBar>
        {['Plik', 'Folder', 'Selekcja', 'Widok', 'Narzędzia', 'Sieć', 'Opcje'].map(m => <MenuItem key={m}>{m}</MenuItem>)}
        <MenuItem $end>Pomoc</MenuItem>
      </MenuBar>
      <ToolBar>
        {tools.map((t, i) => {
          if (t === 'sep') return <ToolSep key={i} />;
          const [Icon, w] = t;
          return <Tool key={i} $w={w}><Icon /></Tool>;
        })}
      </ToolBar>
      <Panels>
        <FilePanel
          tab="Program Files"
          path="C:\Program Files\*.*"
          upDate="2011-01-14 16:19"
          upAttr={R}
          rows={leftRows}
          status="Wybrano 0 z 137 folderów oraz 0 z 1 plików [ 0 kB z 0 kB]"
          thumb={73}
        />
        <FilePanel
          tab="Tomek"
          path="C:\Users\Tomek\*.*"
          upDate="2011-01-05 23:34"
          upAttr={D}
          rows={rightRows}
          status="Wybrano 0 z 29 folderów oraz 0 z 12 plików [ 0 kB z 4 651 kB]"
          thumb={250}
        />
      </Panels>
      <CommandRow>
        <CmdLabel>C:\Users\Tomek\&gt;</CmdLabel>
        <CmdInput>
          <CmdField />
          <CmdDrop><Caret $s={4} /></CmdDrop>
        </CmdInput>
      </CommandRow>
      <FnBar>
        {fnItems.map(([Icon, label]) => (
          <FnItem key={label}><Icon />{label}</FnItem>
        ))}
      </FnBar>
      <TaskBar>
        <Orb />
        <Quick>
          <QuickDot $c="#6a8ab0" /><QuickDot $c="#4a7ad0" /><QuickDot $c="#c04a4a" /><QuickDot $c="#8a9aa8" />
        </Quick>
        <TaskBtn /><TaskBtn /><TaskBtn />
        <Tray>
          {trayItems.map(([c, w, l], i) => <TrayDot key={i} $c={c} $w={w} $l={l} />)}
        </Tray>
      </TaskBar>
      <Watermark>programosy.pl</Watermark>
    </Window>
  );
}
